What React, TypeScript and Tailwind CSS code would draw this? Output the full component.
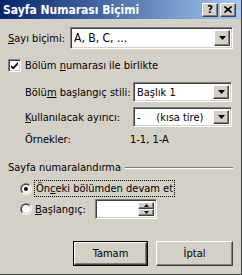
import React from "react";

const sunken =
  "border border-t-[#808080] border-l-[#808080] border-r-white border-b-white shadow-[inset_1px_1px_0_#404040,inset_-1px_-1px_0_#d4d0c8]";
const raised =
  "border border-t-white border-l-white border-r-[#404040] border-b-[#404040] shadow-[inset_-1px_-1px_0_#808080,inset_1px_1px_0_#d4d0c8]";

function Arrow() {
  return (
    <svg width="7" height="4" viewBox="0 0 7 4">
      <path d="M0 0h7L3.5 4z" fill="#000" />
    </svg>
  );
}

function Combo({ value, w, h, big }: { value: string; w: string; h: string; big?: boolean }) {
  return (
    <div className={`${sunken} ${w} ${h} shrink-0 bg-white flex items-center p-[2px]`}>
      <span className={`flex-1 pl-[1px] whitespace-pre ${big ? "text-[12px]" : ""}`}>{value}</span>
      <div className={`${raised} bg-[#d4d0c8] w-[16px] h-full flex items-center justify-center`}>
        <Arrow />
      </div>
    </div>
  );
}

function Radio({ checked }: { checked?: boolean }) {
  return (
    <div className="shrink-0 w-[12px] h-[12px] rounded-full bg-[linear-gradient(135deg,#808080_50%,#ffffff_50%)] p-[1px]">
      <div className="w-full h-full rounded-full bg-[linear-gradient(135deg,#404040_50%,#d4d0c8_50%)] p-[1px]">
        <div className="w-full h-full rounded-full bg-white flex items-center justify-center">
          {checked && <div className="w-[4px] h-[4px] rounded-full bg-black" />}
        </div>
      </div>
    </div>
  );
}

export default function App() {
  return (
    <div className="w-[242px] h-[275px] bg-[#d4d0c8] border-r border-b border-r-[#404040] border-b-[#404040] flex flex-col font-['DejaVu_Sans_Condensed','Liberation_Sans',Arial,sans-serif] text-[11px] text-black leading-none whitespace-nowrap">
      {/* title bar */}
      <div className="h-[19px] flex items-center justify-between pl-[3px] pr-[5px] bg-gradient-to-r from-[#0a246a] to-[#a6caf0]">
        <span className="text-white font-bold text-[12px]">Sayfa Numarası Biçimi</span>
        <div className="flex gap-[2px]">
          <div className={`${raised} bg-[#d4d0c8] w-[16px] h-[14px] flex items-center justify-center font-bold text-[11px]`}>?</div>
          <div className={`${raised} bg-[#d4d0c8] w-[16px] h-[14px] flex items-center justify-center`}>
            <svg width="8" height="7" viewBox="0 0 8 7">
              <path d="M0.5 0.5l7 6M7.5 0.5l-7 6" stroke="#000" strokeWidth="1.6" />
            </svg>
          </div>
        </div>
      </div>

      <div className="flex flex-col px-[8px]">
        <div className="mt-[8px] flex items-center h-[22px]">
          <span className="w-[62px] shrink-0"><u>S</u>ayı biçimi:</span>
          <Combo value="A, B, C, ..." w="w-[163px]" h="h-[22px]" big />
        </div>

        <div className="mt-[10px] flex items-center h-[13px] gap-[4px]">
          <div className={`${sunken} shrink-0 bg-white w-[13px] h-[13px] flex items-center justify-center`}>
            <svg width="7" height="7" viewBox="0 0 7 7">
              <path d="M0 3l2 2 5-5v2.5l-5 5-2-2z" fill="#000" />
            </svg>
          </div>
          <span>Bölüm <u>n</u>umarası ile birlikte</span>
        </div>

        <div className="pl-[17px] flex flex-col">
          <div className="mt-[10px] flex items-center h-[20px]">
            <span className="w-[108px] shrink-0">Bölü<u>m</u> başlangıç stili:</span>
            <Combo value="Başlık 1" w="w-[99px]" h="h-[20px]" />
          </div>
          <div className="mt-[5px] flex items-center h-[20px]">
            <span className="w-[108px] shrink-0"><u>K</u>ullanılacak ayırıcı:</span>
            <Combo value={"-     (kısa tire)"} w="w-[99px]" h="h-[20px]" />
          </div>
          <div className="mt-[6px] flex items-center h-[13px]">
            <span className="w-[105px] shrink-0">Örnekler:</span>
            <span>1-1, 1-A</span>
          </div>
        </div>

        <div className="mt-[15px] flex items-center h-[13px]">
          <span>Sayfa numaralandırma</span>
          <div className="flex-1 ml-[4px] border-t border-b border-t-[#808080] border-b-white" />
        </div>

        <div className="pl-[12px] flex flex-col">
          <div className="mt-[6px] flex items-center h-[17px] gap-[2px]">
            <Radio checked />
            <span className="border border-dotted border-black px-[1px] py-[2px]">Ön<u>c</u>eki bölümden devam et</span>
          </div>
          <div className="mt-[2px] flex items-center h-[20px]">
            <Radio />
            <span className="ml-[3px] w-[60px] shrink-0"><u>B</u>aşlangıç:</span>
            <div className={`${sunken} shrink-0 bg-white w-[62px] h-[20px] flex justify-end p-[2px]`}>
              <div className="flex flex-col w-[16px] h-full">
                <div className={`${raised} bg-[#d4d0c8] flex-1 flex items-center justify-center`}>
                  <svg width="5" height="3" viewBox="0 0 5 3"><path d="M0 3h5L2.5 0z" fill="#000" /></svg>
                </div>
                <div className={`${raised} bg-[#d4d0c8] flex-1 flex items-center justify-center`}>
                  <svg width="5" height="3" viewBox="0 0 5 3"><path d="M0 0h5L2.5 3z" fill="#000" /></svg>
                </div>
              </div>
            </div>
          </div>
        </div>

        <div className="mt-[22px] flex justify-end gap-[8px]">
          <div className="border border-black">
            <div className={`${raised} bg-[#d4d0c8] w-[73px] h-[23px] flex items-center justify-center`}>Tamam</div>
          </div>
          <div className={`${raised} bg-[#d4d0c8] w-[77px] h-[25px] flex items-center justify-center`}>İptal</div>
        </div>
      </div>
    </div>
  );
}
